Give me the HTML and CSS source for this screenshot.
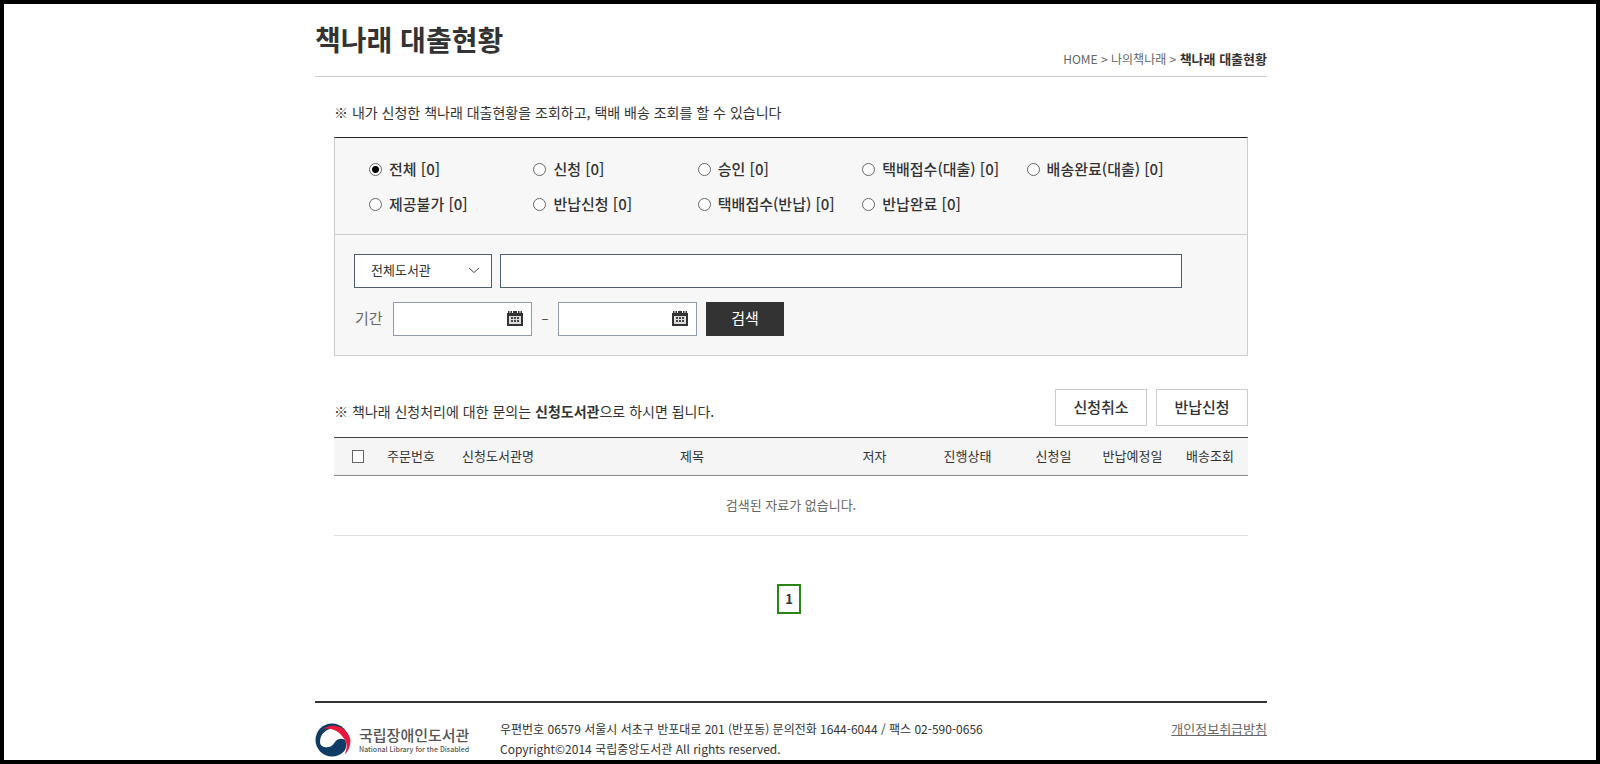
FILE: index.html
```html
<!DOCTYPE html>
<html lang="ko">
<head>
<meta charset="utf-8">
<title>책나래 대출현황</title>
<link rel="stylesheet" href="styles.css">
</head>
<body>
<div class="page">
  <header class="page-head">
    <h1 class="title">책나래 대출현황</h1>
    <nav class="crumbs" aria-label="현재 위치">HOME &gt; 나의책나래 &gt; <strong>책나래 대출현황</strong></nav>
  </header>
  <main class="content">
    <p class="note">※ 내가 신청한 책나래 대출현황을 조회하고, 택배 배송 조회를 할 수 있습니다</p>
    <form class="search">
      <div class="states">
        <label class="state"><input type="radio" name="state" checked>전체 [0]</label>
        <label class="state"><input type="radio" name="state">신청 [0]</label>
        <label class="state"><input type="radio" name="state">승인 [0]</label>
        <label class="state"><input type="radio" name="state">택배접수(대출) [0]</label>
        <label class="state"><input type="radio" name="state">배송완료(대출) [0]</label>
        <label class="state"><input type="radio" name="state">제공불가 [0]</label>
        <label class="state"><input type="radio" name="state">반납신청 [0]</label>
        <label class="state"><input type="radio" name="state">택배접수(반납) [0]</label>
        <label class="state"><input type="radio" name="state">반납완료 [0]</label>
      </div>
      <div class="filters">
        <div class="filter-row">
          <div class="select-wrap">
            <select class="select" aria-label="도서관 선택"><option>전체도서관</option></select>
            <svg class="chevron" width="12" height="7" viewBox="0 0 12 7" aria-hidden="true"><path d="M1 1l5 4.500 5-4.500" fill="none" stroke="#444"/></svg>
          </div>
          <input class="keyword" type="text" aria-label="검색어">
        </div>
        <div class="filter-row">
          <label class="period" for="from">기간</label>
          <div class="date-wrap">
            <input class="date" id="from" type="text">
            <button class="cal" type="button" aria-label="시작일 선택"><svg width="16" height="15" viewBox="0 0 16 15"><path fill="#333" d="M0 2h1V0h4v2h1V0h4v2h1V0h4v2h1v13H0z"/><path fill="#999" d="M2 0h2v2H2zM12 0h2v2h-2z"/><path fill="#ddd" d="M2 5h12v8H2z"/><path fill="#444" d="M4 6h2v2H4zM7 6h2v2H7zM10 6h2v2h-2zM4 9h2v2H4zM7 9h2v2H7zM10 9h2v2h-2z"/></svg></button>
          </div>
          <span class="dash">–</span>
          <div class="date-wrap">
            <input class="date" type="text" aria-label="종료일">
            <button class="cal" type="button" aria-label="종료일 선택"><svg width="16" height="15" viewBox="0 0 16 15"><path fill="#333" d="M0 2h1V0h4v2h1V0h4v2h1V0h4v2h1v13H0z"/><path fill="#999" d="M2 0h2v2H2zM12 0h2v2h-2z"/><path fill="#ddd" d="M2 5h12v8H2z"/><path fill="#444" d="M4 6h2v2H4zM7 6h2v2H7zM10 6h2v2h-2zM4 9h2v2H4zM7 9h2v2H7zM10 9h2v2h-2z"/></svg></button>
          </div>
          <button class="submit" type="submit">검색</button>
        </div>
      </div>
    </form>
    <div class="list-head">
      <p class="inquiry">※ 책나래 신청처리에 대한 문의는 <strong>신청도서관</strong>으로 하시면 됩니다.</p>
      <div class="actions">
        <button class="action" type="button">신청취소</button>
        <button class="action" type="button">반납신청</button>
      </div>
    </div>
    <table class="list">
      <colgroup><col class="c-check"><col class="c-order"><col class="c-library"><col><col class="c-author"><col class="c-author"><col class="c-date"><col class="c-date"><col class="c-track"></colgroup>
      <thead>
        <tr><th><input class="check" type="checkbox" aria-label="전체 선택"></th><th>주문번호</th><th>신청도서관명</th><th>제목</th><th>저자</th><th>진행상태</th><th>신청일</th><th>반납예정일</th><th>배송조회</th></tr>
      </thead>
      <tbody>
        <tr><td colspan="9">검색된 자료가 없습니다.</td></tr>
      </tbody>
    </table>
    <nav class="pager" aria-label="페이지"><a class="page-no" href="#" aria-current="page">1</a></nav>
  </main>
  <footer class="footer">
    <div class="brand">
      <svg width="36" height="36" viewBox="0 0 36 36" aria-hidden="true">
        <circle cx="17" cy="17" r="16.500" fill="#0f3c64"/>
        <path fill="#fff" d="M5 19C5 11 11 6 19 5c9 0 14 5 15 13-1 3-2 1-3 0-3-3-8-3-11 1-3 5-7 6-11 5-3-1-4-3-4-5z"/>
        <path fill="#fff" d="M28 13c4 5 4 11 1 18l3 3 4-14z"/>
        <path fill="#e8193c" d="M8 6C18-1 33 4 35.500 17c0 6-2 11-6 15 3-7 3-12-1-17C24 8 16 4 8 6z"/>
      </svg>
      <div class="brand-text"><span class="brand-ko">국립장애인도서관</span><span class="brand-en">National Library for the Disabled</span></div>
    </div>
    <address class="address">우편번호 06579 서울시 서초구 반포대로 201 (반포동) 문의전화 1644-6044 / 팩스 02-590-0656<br>Copyright©2014 국립중앙도서관 All rights reserved.</address>
    <a class="privacy" href="#">개인정보취급방침</a>
  </footer>
</div>
</body>
</html>
```
FILE: styles.css
```css
* { box-sizing: border-box; }
body {
  margin: 0;
  min-height: 100vh;
  padding-right: 18px;
  border: 4px solid #000;
  background: #fff;
  color: #333;
  font: 13px/20px "Noto Sans CJK KR", sans-serif;
}
button, input, select { font: inherit; color: inherit; margin: 0; }
h1, p { margin: 0; }
.page { max-width: 952px; margin: 0 auto; }
.page-head {
  display: flex;
  justify-content: space-between;
  align-items: flex-end;
  height: 73px;
  padding-bottom: 7px;
  border-bottom: 1px solid #ccc;
}
.title { font-size: 28px; line-height: 40px; font-weight: 700; padding-bottom: 10px; }
.crumbs { font-size: 12px; color: #666; }
.crumbs strong { font-size: 13px; color: #333; }
.content { padding: 25px 19px 0; }
.note { padding-bottom: 15px; font-size: 14px; }
.search { border: 1px solid #ccc; border-top-color: #222; background: #f7f7f7; }
.states {
  display: grid;
  grid-template-columns: repeat(5, 1fr);
  row-gap: 15px;
  padding: 21px 56px 20px 34px;
  border-bottom: 1px solid #ccc;
}
.state {
  display: flex;
  align-items: center;
  gap: 7px;
  font-size: 15px;
  font-weight: 500;
  white-space: nowrap;
}
.state input { width: 13px; height: 13px; }
.state input, .check { appearance: none; border: 1px solid #666; background: #fff; }
.state input { border-radius: 50%; }
.state input:checked { background: radial-gradient(circle, #000 3px, #fff 4px); }
.filters { display: grid; gap: 14px; padding: 19px 65px 19px 19px; }
.filter-row { display: flex; align-items: center; }
.select-wrap { position: relative; width: 138px; }
.select {
  appearance: none;
  display: block;
  width: 100%;
  height: 34px;
  padding: 0 30px 2px 16px;
  border: 1px solid #4f5d73;
  border-radius: 0;
  background: #fff;
}
.chevron { position: absolute; right: 12px; top: 13px; }
.keyword { flex: 1; height: 34px; margin-left: 8px; border: 1px solid #4f5d73; }
.period { width: 39px; padding: 0 0 2px 1px; font-size: 15px; color: #666; }
.date-wrap { position: relative; width: 139px; }
.date { display: block; width: 100%; height: 34px; border: 1px solid #8f9bae; }
.cal { position: absolute; right: 9px; top: 9px; padding: 0; border: 0; background: none; line-height: 0; }
.dash { width: 26px; padding-bottom: 2px; text-align: center; font-size: 13px; }
.submit { width: 78px; height: 34px; margin-left: 9px; padding: 0 0 2px; border: 0; background: #333; color: #fff; font-size: 15px; }
.list-head { display: flex; justify-content: space-between; align-items: center; padding: 33px 0 11px; }
.inquiry { padding-top: 6px; font-size: 14px; }
.actions { display: flex; gap: 9px; }
.action { width: 92px; height: 37px; padding: 0 0 2px; border: 1px solid #ccc; background: #fff; font-size: 15px; font-weight: 500; }
.list { width: 100%; table-layout: fixed; border-collapse: collapse; }
.list th { height: 38px; padding: 0 0 2px; border-top: 1px solid #444; border-bottom: 1px solid #888; background: #f5f5f5; font-weight: 400; }
.list td { height: 60px; padding: 0 0 2px; border-bottom: 1px solid #ddd; color: #666; text-align: center; }
.c-check { width: 48px; }
.c-order { width: 58px; }
.c-library { width: 116px; }
.c-author { width: 93px; }
.c-date { width: 79px; }
.c-track { width: 76px; }
.check { display: block; width: 12px; height: 13px; margin: 2px auto 0; }
.pager { display: flex; justify-content: center; padding: 48px 4px 87px 0; }
.page-no { width: 24px; height: 30px; border: 2px solid #2a8514; color: #333; font-weight: 700; line-height: 26px; text-align: center; text-decoration: none; }
.footer { display: flex; align-items: flex-start; padding-top: 16px; border-top: 2px solid #333; }
.brand { display: flex; gap: 8px; width: 185px; height: 41px; padding-top: 4px; }
.brand-text { display: flex; flex-direction: column; padding-top: 3px; color: #555; white-space: nowrap; }
.brand-ko { font-size: 15px; line-height: 18px; font-weight: 500; }
.brand-en { font-size: 7px; line-height: 10px; font-weight: 500; }
.address { flex: 1; font-size: 12px; font-style: normal; }
.privacy { color: #666; }
```
